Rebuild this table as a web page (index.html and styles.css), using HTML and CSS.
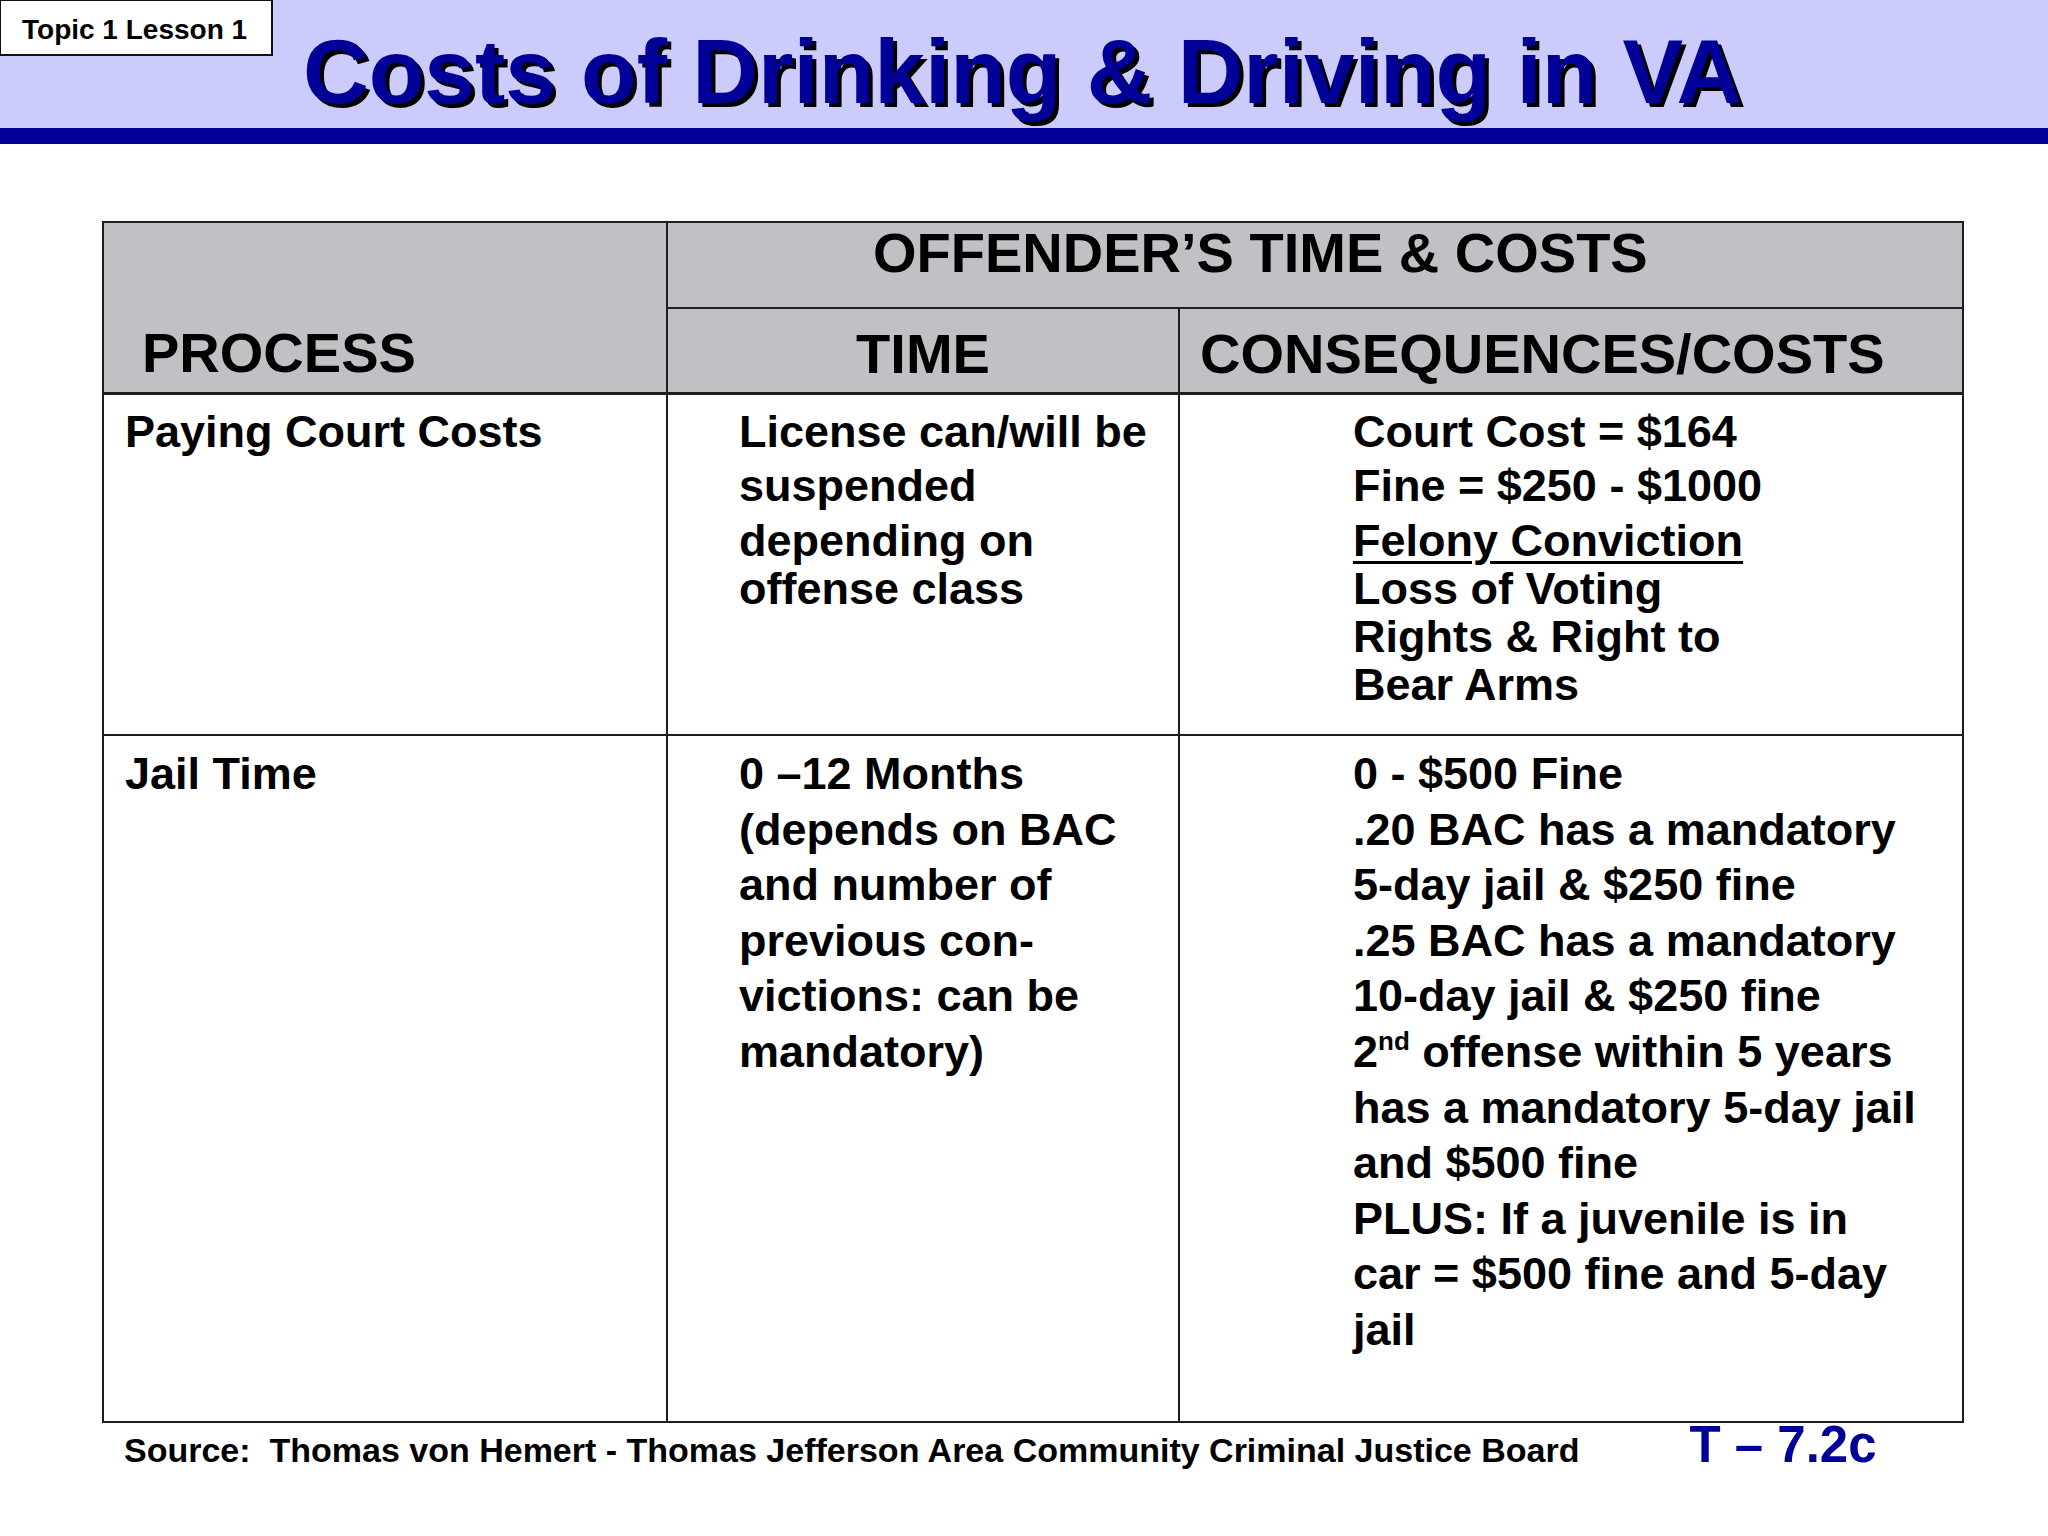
FILE: index.html
```html
<!DOCTYPE html>
<html lang="en">
<head>
<meta charset="utf-8">
<title>Costs of Drinking &amp; Driving in VA</title>
<link rel="stylesheet" href="styles.css">
</head>
<body>
<header class="banner">
  <div class="topic">Topic 1 Lesson 1</div>
  <h1 class="title">Costs of Drinking &amp; Driving in VA</h1>
</header>
<main class="content">
  <table class="grid">
    <colgroup><col class="c1"><col class="c2"><col class="c3"></colgroup>
    <thead>
      <tr class="hrow1">
        <th class="process" rowspan="2">PROCESS</th>
        <th class="offender" colspan="2">OFFENDER’S TIME &amp; COSTS</th>
      </tr>
      <tr class="hrow2">
        <th class="time">TIME</th>
        <th class="cons">CONSEQUENCES/COSTS</th>
      </tr>
    </thead>
    <tbody>
      <tr class="row1">
        <td class="proc">Paying Court Costs</td>
        <td class="tcol">
          <p>License can/will be</p>
          <p>suspended</p>
          <p>depending on<br>offense class</p>
        </td>
        <td class="ccol">
          <p>Court Cost = $164</p>
          <p>Fine = $250 - $1000</p>
          <p><span class="ul">Felony Conviction</span><br>Loss of Voting<br>Rights &amp; Right to<br>Bear Arms</p>
        </td>
      </tr>
      <tr class="row2">
        <td class="proc">Jail Time</td>
        <td class="tcol">0 –12 Months<br>(depends on BAC<br>and number of<br>previous con-<br>victions: can be<br>mandatory)</td>
        <td class="ccol">0 - $500 Fine<br>.20 BAC has a mandatory<br>5-day jail &amp; $250 fine<br>.25 BAC has a mandatory<br>10-day jail &amp; $250 fine<br>2<span class="sup">nd</span> offense within 5 years<br>has a mandatory 5-day jail<br>and $500 fine<br>PLUS: If a juvenile is in<br>car = $500 fine and 5-day<br>jail</td>
      </tr>
    </tbody>
  </table>
  <footer class="foot">
    <span class="source">Source:&nbsp; Thomas von Hemert - Thomas Jefferson Area Community Criminal Justice Board</span>
    <span class="code">T – 7.2c</span>
  </footer>
</main>
</body>
</html>
```

FILE: styles.css
```css
html, body {
  margin: 0;
  padding: 0;
  background: #ffffff;
}
body {
  width: 2048px;
  height: 1536px;
  overflow: hidden;
  font-family: "Liberation Sans", Arial, sans-serif;
  font-weight: bold;
  color: #000;
}

/* ---------- banner ---------- */
.banner {
  display: flex;
  align-items: flex-start;
  height: 128px;
  background: #ccccfc;
  border-bottom: 16px solid #000099;
}
.topic {
  box-sizing: border-box;
  width: 273px;
  height: 56px;
  background: #fff;
  border: 2px solid #111;
  border-top-width: 1px;
  border-left-width: 1px;
  padding: 6px 0 0 21px;
  font-size: 28px;
  line-height: 46px;
  white-space: nowrap;
}
.title {
  margin: 26px 0 0 30px;
  font-size: 91px;
  line-height: 91px;
  font-weight: bold;
  color: #000099;
  text-shadow: 4px 4px 0 #000;
  white-space: nowrap;
}

/* ---------- table ---------- */
.content {
  padding: 77px 0 0 102px;
}
.grid {
  border-collapse: collapse;
  table-layout: fixed;
  width: 1860px;
}
.c1 { width: 564px; }
.c2 { width: 512px; }
.c3 { width: 784px; }

.grid th,
.grid td {
  border: 2px solid #1e1e1e;
  padding: 0;
  white-space: nowrap;
}
.grid th {
  background: #c1c0c4;
  font-size: 56px;
  line-height: 56px;
  font-weight: bold;
  vertical-align: top;
}
.hrow1 { height: 86px; }
.hrow2 { height: 85px; }
.hrow2 th { border-bottom-width: 3px; }
.process {
  text-align: left;
  vertical-align: bottom !important;
  padding: 0 0 11px 38px !important;
  border-bottom-width: 3px !important;
}
.offender {
  text-align: left;
  padding: 2px 0 0 205px !important;
}
.time {
  text-align: center;
  padding: 17px 0 0 0 !important;
}
.cons {
  text-align: left;
  padding: 17px 0 0 20px !important;
}

.grid td {
  font-size: 45px;
  vertical-align: top;
}
.row1 { height: 342px; }
.row2 { height: 687px; }
.row1 td {
  line-height: 48px;
  padding-top: 13px;
}
.row1 p {
  margin: 0 0 6.5px 0;
}
.row2 td {
  line-height: 55.6px;
  padding-top: 10px;
}
.proc { padding-left: 21px !important; }
.tcol { padding-left: 71px !important; }
.ccol { padding-left: 173px !important; }

.ul {
  text-decoration: underline;
  text-decoration-thickness: 3px;
  text-underline-offset: 5px;
}
.sup {
  font-size: 26px;
  line-height: 0;
  vertical-align: 17px;
}

/* ---------- footer ---------- */
.foot {
  display: flex;
  align-items: baseline;
  margin-top: -4px;
  padding-left: 22px;
  line-height: 52px;
}
.source {
  font-size: 34px;
  white-space: nowrap;
}
.code {
  margin-left: 110px;
  font-size: 51px;
  color: #000099;
  white-space: nowrap;
}
```
